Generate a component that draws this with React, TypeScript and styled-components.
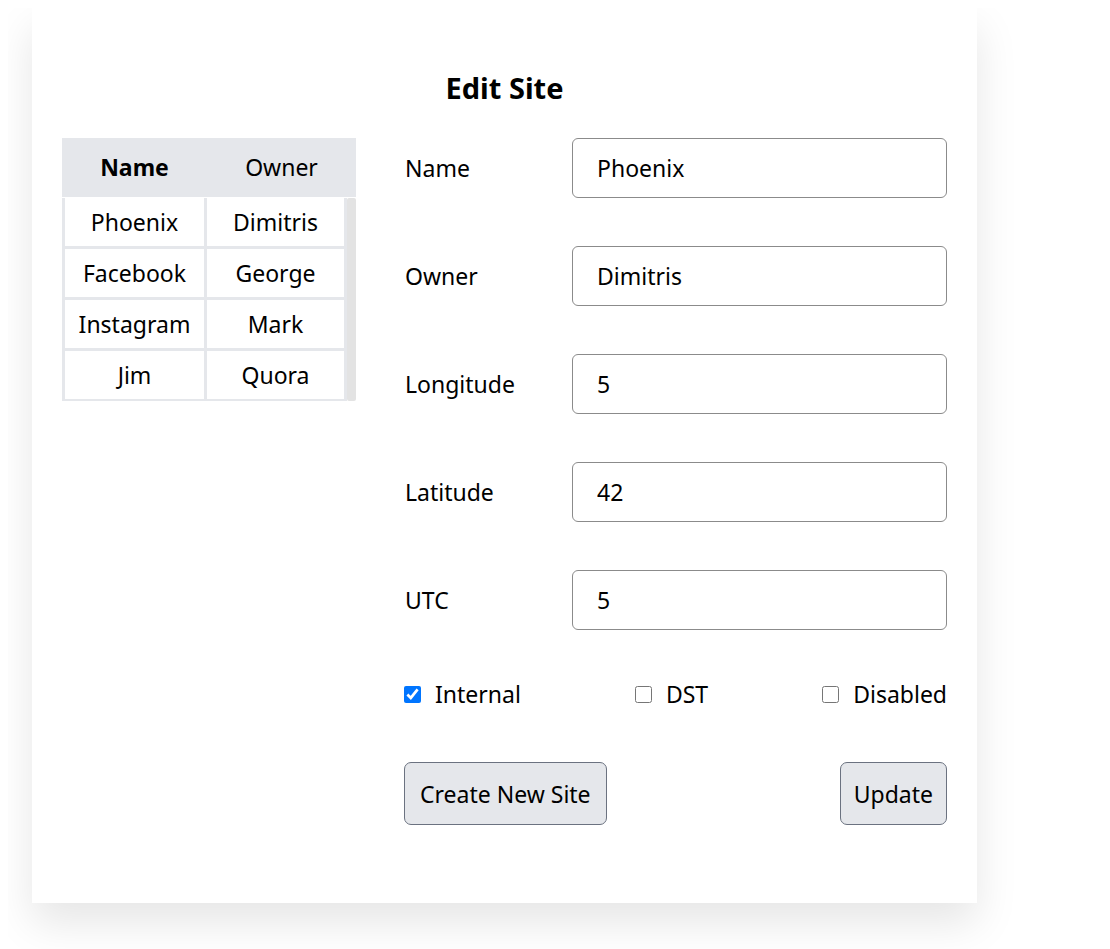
import React from "react";
import styled, { createGlobalStyle } from "styled-components";

const GlobalStyle = createGlobalStyle`
  body {
    margin: 8px;
    background: #ffffff;
    font-family: "Noto Sans", "DejaVu Sans", sans-serif;
    color: #000;
  }
`;

const Card = styled.div`
  width: 945px;
  box-sizing: border-box;
  margin: 0 0 46px 24px;
  padding: 64px 30px 78px;
  background: #fff;
  box-shadow: 0 20px 40px rgba(0, 0, 0, 0.1);
`;

const Title = styled.h1`
  margin: 0 0 34px;
  font-size: 29px;
  line-height: 32px;
  font-weight: 700;
  text-align: center;
`;

const Main = styled.div`
  display: flex;
  gap: 48px;
  align-items: flex-start;
`;

const TableBox = styled.div`
  width: 294px;
  flex: none;
`;

const HeadRow = styled.div`
  display: grid;
  grid-template-columns: 145px 149px;
  height: 59px;
  background: #e5e7eb;
  align-items: center;
  margin-bottom: 1px;
`;

const HeadCell = styled.div<{ $bold?: boolean }>`
  text-align: center;
  font-size: 23px;
  line-height: 30px;
  padding-bottom: 2px;
  font-weight: ${(p) => (p.$bold ? 700 : 400)};
`;

const BodyWrap = styled.div`
  display: flex;
`;

const BodyGrid = styled.div`
  display: grid;
  grid-template-columns: 139px 137px;
  grid-auto-rows: 48px;
  gap: 3px;
  padding: 0 3px 2px 3px;
  background: #e5e7eb;
`;

const Cell = styled.div`
  background: #fff;
  display: flex;
  align-items: center;
  justify-content: center;
  font-size: 23px;
`;

const ScrollTrack = styled.div`
  width: 9px;
  background: #e3e3e3;
  border-radius: 2px;
`;

const Form = styled.div`
  flex: 1;
  display: flex;
  flex-direction: column;
  gap: 48px;
`;

const FieldRow = styled.label`
  display: grid;
  grid-template-columns: 168px 375px;
  align-items: center;
  height: 60px;
`;

const LabelText = styled.span`
  font-size: 23px;
  padding-left: 1px;
`;

const TextInput = styled.input`
  box-sizing: border-box;
  height: 60px;
  width: 375px;
  border: 1px solid #8b8b8b;
  border-radius: 6px;
  padding: 0 0 0 24px;
  font-family: inherit;
  font-size: 23px;
  color: #000;
  background: #fff;
  outline: none;
`;

const CheckRow = styled.div`
  display: flex;
  justify-content: space-between;
  align-items: center;
  height: 32px;
`;

const CheckLabel = styled.label`
  display: flex;
  align-items: center;
  gap: 14px;
  font-size: 23px;
`;

const Check = styled.input`
  width: 17px;
  height: 17px;
  margin: 0;
`;

const ButtonRow = styled.div`
  display: flex;
  justify-content: space-between;
  margin-top: 4px;
`;

const Button = styled.button<{ $pad?: number }>`
  height: 63px;
  padding: 0 ${(p) => p.$pad ?? 15}px;
  font-family: inherit;
  font-size: 23px;
  color: #000;
  background: #e5e7eb;
  border: 1px solid #6b7280;
  border-radius: 7px;
`;

const rows = [
  ["Phoenix", "Dimitris"],
  ["Facebook", "George"],
  ["Instagram", "Mark"],
  ["Jim", "Quora"],
];

const fields = [
  ["Name", "Phoenix"],
  ["Owner", "Dimitris"],
  ["Longitude", "5"],
  ["Latitude", "42"],
  ["UTC", "5"],
];

export default function App() {
  return (
    <>
      <GlobalStyle />
      <Card>
        <Title>Edit Site</Title>
        <Main>
          <TableBox>
            <HeadRow>
              <HeadCell $bold>Name</HeadCell>
              <HeadCell>Owner</HeadCell>
            </HeadRow>
            <BodyWrap>
              <BodyGrid>
                {rows.map(([a, b]) => (
                  <React.Fragment key={a}>
                    <Cell>{a}</Cell>
                    <Cell>{b}</Cell>
                  </React.Fragment>
                ))}
              </BodyGrid>
              <ScrollTrack />
            </BodyWrap>
          </TableBox>
          <Form>
            {fields.map(([l, v]) => (
              <FieldRow key={l}>
                <LabelText>{l}</LabelText>
                <TextInput defaultValue={v} />
              </FieldRow>
            ))}
            <CheckRow>
              <CheckLabel>
                <Check type="checkbox" defaultChecked />
                Internal
              </CheckLabel>
              <CheckLabel>
                <Check type="checkbox" />
                DST
              </CheckLabel>
              <CheckLabel>
                <Check type="checkbox" />
                Disabled
              </CheckLabel>
            </CheckRow>
            <ButtonRow>
              <Button>Create New Site</Button>
              <Button $pad={13}>Update</Button>
            </ButtonRow>
          </Form>
        </Main>
      </Card>
    </>
  );
}
